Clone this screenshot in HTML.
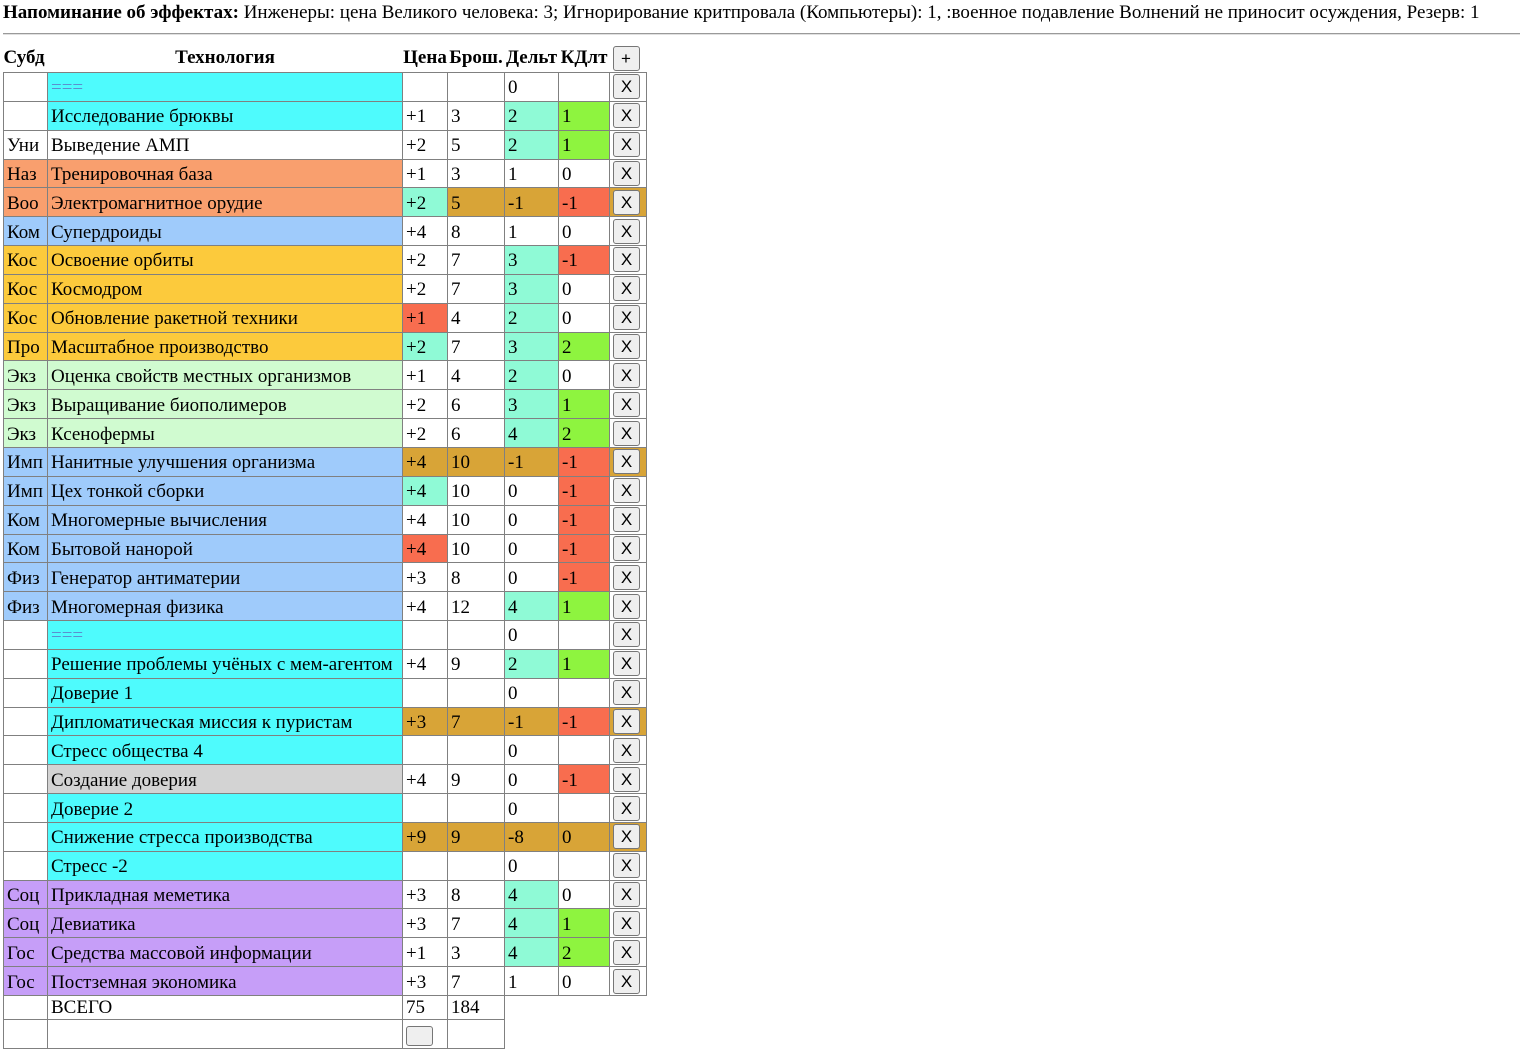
<!DOCTYPE html>
<html><head><meta charset="utf-8">
<style>
html,body{margin:0;padding:0;background:#fff;}
body{font-family:"Liberation Serif",serif;font-size:19px;color:#000;width:1523px;height:1024px;overflow:hidden;position:relative;}
.top{position:absolute;left:3px;top:2px;white-space:nowrap;line-height:21px;}
.hr{position:absolute;left:3px;top:33px;width:1517px;height:0;border-top:1px solid #9a9a9a;border-bottom:1px solid #e0e0e0;}
table{position:absolute;left:3px;top:44px;border-collapse:collapse;table-layout:fixed;}
td,th{padding:0 3px;line-height:20px;white-space:nowrap;overflow:hidden;text-align:left;}
tbody td{border:1px solid #808080;height:27.85px;box-sizing:border-box;padding-top:3px;}
tbody tr{height:28.85px;}
thead th{font-weight:bold;height:28px;padding:0;text-align:center;}
.b{display:inline-block;width:27px;height:25px;box-sizing:border-box;border:1px solid #767676;border-radius:3px;background:#efefef;font-family:"Liberation Sans",sans-serif;font-size:17px;font-weight:normal;line-height:23px;text-align:center;vertical-align:middle;}
td.x{padding:0 0 0 3px;}
.cy{background:#4efbfd}.sa{background:#f99f6e}.bl{background:#9fcbfb}.ye{background:#fcca3c}
.lg{background:#d0fbd0}.pu{background:#c69ef8}.gr{background:#d3d3d3}
.m{background:#8ffad6}.g{background:#8ef43f}.go{background:#d8a437}.r{background:#f86d4f}
.eq{color:#5b8fcf;}
tbody tr.tot{height:24px;}
tr.tot td{height:24px;padding-top:0;}
</style></head><body>
<div class="top"><b>Напоминание об эффектах:</b> Инженеры: цена Великого человека: 3; Игнорирование критпровала (Компьютеры): 1, :военное подавление Волнений не приносит осуждения, Резерв: 1</div>
<div class="hr"></div>
<table>
<colgroup><col style="width:44px"><col style="width:355px"><col style="width:45px"><col style="width:57px"><col style="width:54px"><col style="width:51px"><col style="width:37px"></colgroup>
<thead><tr><th style="text-align:left">Субд</th><th>Технология</th><th>Цена</th><th>Брош.</th><th>Дельт</th><th>КДлт</th><th style="text-align:left;padding-left:3px"><span class="b">+</span></th></tr></thead>
<tbody>
<tr><td></td><td class="cy eq">===</td><td></td><td></td><td>0</td><td></td><td class="x"><span class="b">X</span></td></tr>
<tr><td></td><td class="cy">Исследование брюквы</td><td>+1</td><td>3</td><td class="m">2</td><td class="g">1</td><td class="x"><span class="b">X</span></td></tr>
<tr><td>Уни</td><td>Выведение АМП</td><td>+2</td><td>5</td><td class="m">2</td><td class="g">1</td><td class="x"><span class="b">X</span></td></tr>
<tr><td class="sa">Наз</td><td class="sa">Тренировочная база</td><td>+1</td><td>3</td><td>1</td><td>0</td><td class="x"><span class="b">X</span></td></tr>
<tr><td class="sa">Воо</td><td class="sa">Электромагнитное орудие</td><td class="m">+2</td><td class="go">5</td><td class="go">-1</td><td class="r">-1</td><td class="x go"><span class="b">X</span></td></tr>
<tr><td class="bl">Ком</td><td class="bl">Супердроиды</td><td>+4</td><td>8</td><td>1</td><td>0</td><td class="x"><span class="b">X</span></td></tr>
<tr><td class="ye">Кос</td><td class="ye">Освоение орбиты</td><td>+2</td><td>7</td><td class="m">3</td><td class="r">-1</td><td class="x"><span class="b">X</span></td></tr>
<tr><td class="ye">Кос</td><td class="ye">Космодром</td><td>+2</td><td>7</td><td class="m">3</td><td>0</td><td class="x"><span class="b">X</span></td></tr>
<tr><td class="ye">Кос</td><td class="ye">Обновление ракетной техники</td><td class="r">+1</td><td>4</td><td class="m">2</td><td>0</td><td class="x"><span class="b">X</span></td></tr>
<tr><td class="ye">Про</td><td class="ye">Масштабное производство</td><td class="m">+2</td><td>7</td><td class="m">3</td><td class="g">2</td><td class="x"><span class="b">X</span></td></tr>
<tr><td class="lg">Экз</td><td class="lg">Оценка свойств местных организмов</td><td>+1</td><td>4</td><td class="m">2</td><td>0</td><td class="x"><span class="b">X</span></td></tr>
<tr><td class="lg">Экз</td><td class="lg">Выращивание биополимеров</td><td>+2</td><td>6</td><td class="m">3</td><td class="g">1</td><td class="x"><span class="b">X</span></td></tr>
<tr><td class="lg">Экз</td><td class="lg">Ксенофермы</td><td>+2</td><td>6</td><td class="m">4</td><td class="g">2</td><td class="x"><span class="b">X</span></td></tr>
<tr><td class="bl">Имп</td><td class="bl">Нанитные улучшения организма</td><td class="go">+4</td><td class="go">10</td><td class="go">-1</td><td class="r">-1</td><td class="x go"><span class="b">X</span></td></tr>
<tr><td class="bl">Имп</td><td class="bl">Цех тонкой сборки</td><td class="m">+4</td><td>10</td><td>0</td><td class="r">-1</td><td class="x"><span class="b">X</span></td></tr>
<tr><td class="bl">Ком</td><td class="bl">Многомерные вычисления</td><td>+4</td><td>10</td><td>0</td><td class="r">-1</td><td class="x"><span class="b">X</span></td></tr>
<tr><td class="bl">Ком</td><td class="bl">Бытовой нанорой</td><td class="r">+4</td><td>10</td><td>0</td><td class="r">-1</td><td class="x"><span class="b">X</span></td></tr>
<tr><td class="bl">Физ</td><td class="bl">Генератор антиматерии</td><td>+3</td><td>8</td><td>0</td><td class="r">-1</td><td class="x"><span class="b">X</span></td></tr>
<tr><td class="bl">Физ</td><td class="bl">Многомерная физика</td><td>+4</td><td>12</td><td class="m">4</td><td class="g">1</td><td class="x"><span class="b">X</span></td></tr>
<tr><td></td><td class="cy eq">===</td><td></td><td></td><td>0</td><td></td><td class="x"><span class="b">X</span></td></tr>
<tr><td></td><td class="cy">Решение проблемы учёных с мем-агентом</td><td>+4</td><td>9</td><td class="m">2</td><td class="g">1</td><td class="x"><span class="b">X</span></td></tr>
<tr><td></td><td class="cy">Доверие 1</td><td></td><td></td><td>0</td><td></td><td class="x"><span class="b">X</span></td></tr>
<tr><td></td><td class="cy">Дипломатическая миссия к пуристам</td><td class="go">+3</td><td class="go">7</td><td class="go">-1</td><td class="r">-1</td><td class="x go"><span class="b">X</span></td></tr>
<tr><td></td><td class="cy">Стресс общества 4</td><td></td><td></td><td>0</td><td></td><td class="x"><span class="b">X</span></td></tr>
<tr><td></td><td class="gr">Создание доверия</td><td>+4</td><td>9</td><td>0</td><td class="r">-1</td><td class="x"><span class="b">X</span></td></tr>
<tr><td></td><td class="cy">Доверие 2</td><td></td><td></td><td>0</td><td></td><td class="x"><span class="b">X</span></td></tr>
<tr><td></td><td class="cy">Снижение стресса производства</td><td class="go">+9</td><td class="go">9</td><td class="go">-8</td><td class="go">0</td><td class="x go"><span class="b">X</span></td></tr>
<tr><td></td><td class="cy">Стресс -2</td><td></td><td></td><td>0</td><td></td><td class="x"><span class="b">X</span></td></tr>
<tr><td class="pu">Соц</td><td class="pu">Прикладная меметика</td><td>+3</td><td>8</td><td class="m">4</td><td>0</td><td class="x"><span class="b">X</span></td></tr>
<tr><td class="pu">Соц</td><td class="pu">Девиатика</td><td>+3</td><td>7</td><td class="m">4</td><td class="g">1</td><td class="x"><span class="b">X</span></td></tr>
<tr><td class="pu">Гос</td><td class="pu">Средства массовой информации</td><td>+1</td><td>3</td><td class="m">4</td><td class="g">2</td><td class="x"><span class="b">X</span></td></tr>
<tr><td class="pu">Гос</td><td class="pu">Постземная экономика</td><td>+3</td><td>7</td><td>1</td><td>0</td><td class="x"><span class="b">X</span></td></tr>
<tr class="tot"><td></td><td>ВСЕГО</td><td>75</td><td>184</td><td style="border:none"></td><td style="border:none"></td><td style="border:none"></td></tr>
<tr><td></td><td></td><td><span class="b" style="height:20px"></span></td><td></td><td style="border:none"></td><td style="border:none"></td><td style="border:none"></td></tr>
</tbody></table>
</body></html>
